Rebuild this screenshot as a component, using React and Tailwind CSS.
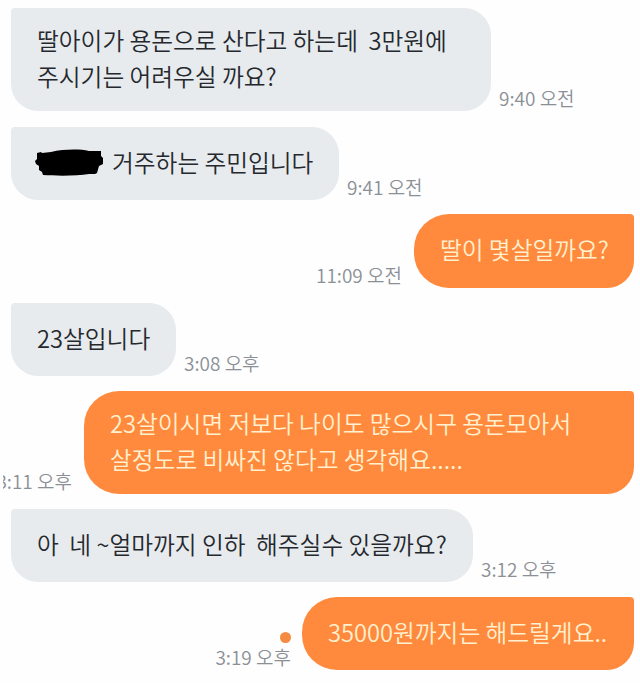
// src/App.jsx
import React from 'react';

const messages = [
  {
    id: 1,
    lines: ['딸아이가 용돈으로 산다고 하는데  3만원에', '주시기는 어려우실 까요?'],
    time: '9:40 오전',
    size: 'w-[480px] h-[103px]',
    gap: 'mb-[16px]',
  },
  {
    id: 2,
    redacted: true,
    lines: ['거주하는 주민입니다'],
    time: '9:41 오전',
    size: 'w-[328px] h-[73px]',
    gap: 'mb-[14px]',
  },
  {
    id: 3,
    mine: true,
    lines: ['딸이 몇살일까요?'],
    time: '11:09 오전',
    size: 'w-[220px] h-[74px]',
    gap: 'mb-[15px]',
  },
  {
    id: 4,
    lines: ['23살입니다'],
    time: '3:08 오후',
    size: 'w-[165px] h-[73px]',
    gap: 'mb-[15px]',
  },
  {
    id: 5,
    mine: true,
    lines: ['23살이시면 저보다 나이도 많으시구 용돈모아서', '살정도로 비싸진 않다고 생각해요.....'],
    time: '3:11 오후',
    size: 'w-[550px] h-[103px]',
    gap: 'mb-[15px]',
  },
  {
    id: 6,
    lines: ['아  네 ~얼마까지 인하  해주실수 있을까요?'],
    time: '3:12 오후',
    size: 'w-[462px] h-[73px]',
    gap: 'mb-[15px]',
  },
  {
    id: 7,
    mine: true,
    unread: true,
    lines: ['35000원까지는 해드릴게요..'],
    time: '3:19 오후',
    size: 'w-[332px] h-[73px]',
    gap: '',
  },
];

// 지명을 가린 검은 낙서
const Redaction = () => (
  <svg width="68" height="28" viewBox="0 0 68 28" className="mt-[2px] -ml-[2px] mr-[9px] shrink-0">
    <path
      d="M2 4L6 3L7 4L16 3C29 0 45 0 54 2L66 2L66 7L68 9L68 15L64 17L62 24L60 25L54 25C42 27 22 27 8 26L7 23L4 21L4 17L1 15L0 12L2 10Z"
      fill="#000"
    />
  </svg>
);

const Bubble = ({ message }) => (
  <div
    className={`flex shrink-0 flex-col justify-center pb-[3px] pl-[26px] text-[23.7px] leading-[36.5px] font-[350] whitespace-pre ${
      message.size
    } ${
      message.mine
        ? 'rounded-[35px] rounded-tr-[4px] rounded-br-[27px] bg-[#ff8a3d] text-[#fff0cf]'
        : 'rounded-[27px] rounded-tl-[4px] bg-[#e7ebee] text-[#25282d]'
    }`}
  >
    {message.lines.map((line) => (
      <p key={line} className="flex items-center">
        {message.redacted && <Redaction />}
        <span>{line}</span>
      </p>
    ))}
  </div>
);

const Time = ({ message }) => (
  <div className="flex shrink-0 flex-col items-end">
    {message.unread && <span className="mb-[1px] h-[11px] w-[11px] rounded-full bg-[#f58a42]" />}
    <span className="text-[19px] leading-[26px] font-[350] whitespace-pre text-[#8b9096]">{message.time}</span>
  </div>
);

function App() {
  return (
    <div className="h-[683px] w-[640px] overflow-hidden bg-[#fefefe] pt-[8px] pr-[6px] pl-[3px] font-['Noto_Sans_CJK_KR',sans-serif]">
      <div className="flex h-full flex-col overflow-hidden">
        {messages.map((message) => (
          <div
            key={message.id}
            className={`flex shrink-0 items-end ${message.gap} ${
              message.mine ? 'flex-row-reverse' : 'gap-[8px] pl-[8px]'
            } ${message.mine ? (message.unread ? 'gap-[11px]' : 'gap-[12px]') : ''}`}
          >
            <Bubble message={message} />
            <Time message={message} />
          </div>
        ))}
      </div>
    </div>
  );
}

export default App;
